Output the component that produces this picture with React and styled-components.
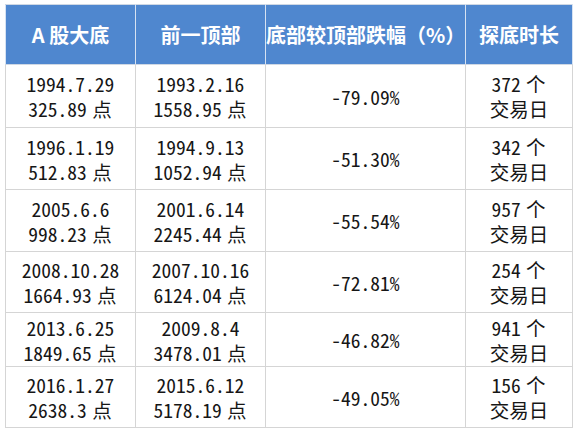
import React from "react";
import styled, { createGlobalStyle } from "styled-components";

const Global = createGlobalStyle`
  html, body { margin: 0; padding: 0; background: #ffffff; }
  body { font-family: "Noto Sans CJK SC", "Noto Sans", sans-serif; }
`;

const Page = styled.div`
  padding: 4px 0 0 5px;
  width: 578px;
  height: 438px;
  box-sizing: border-box;
`;

const Table = styled.table`
  border-collapse: collapse;
  table-layout: fixed;
  width: 567px;
`;

const Col = styled.col`
  width: ${(p) => p.$w}px;
`;

const HeadCell = styled.th`
  height: 59px;
  padding: 0;
  background: #4f87cf;
  color: #ffffff;
  font-family: "Noto Sans CJK SC", sans-serif;
  font-weight: 700;
  font-size: 20px;
  text-align: center;
  vertical-align: middle;
  border: 1px solid #cfd8e4;
  border-left-color: #d6e2f2;
  border-right-color: #d6e2f2;
  white-space: nowrap;
`;

const Row = styled.tr`
  height: ${(p) => p.$h}px;
`;

const Cell = styled.td`
  padding: 0;
  border: 1px solid #d5d5d5;
  text-align: center;
  vertical-align: middle;
  color: #161616;
  font-family: "Noto Sans CJK SC", sans-serif;
  font-feature-settings: "hwid" 1;
  font-size: 19.5px;
  line-height: 25px;
  white-space: nowrap;
`;

const Line = styled.div``;

const Unit = styled.span`
  font-feature-settings: normal;
  letter-spacing: 1px;
`;

const rows = [
  { h: 63, a: ["1994.7.29", "325.89"], b: ["1993.2.16", "1558.95"], p: "-79.09%", d: "372" },
  { h: 62, a: ["1996.1.19", "512.83"], b: ["1994.9.13", "1052.94"], p: "-51.30%", d: "342" },
  { h: 62, a: ["2005.6.6", "998.23"], b: ["2001.6.14", "2245.44"], p: "-55.54%", d: "957" },
  { h: 61, a: ["2008.10.28", "1664.93"], b: ["2007.10.16", "6124.04"], p: "-72.81%", d: "254" },
  { h: 54, a: ["2013.6.25", "1849.65"], b: ["2009.8.4", "3478.01"], p: "-46.82%", d: "941" },
  { h: 61, a: ["2016.1.27", "2638.3"], b: ["2015.6.12", "5178.19"], p: "-49.05%", d: "156" },
];

export default function App() {
  return (
    <Page>
      <Global />
      <Table>
        <colgroup>
          <Col $w={130} />
          <Col $w={130} />
          <Col $w={200} />
          <Col $w={107} />
        </colgroup>
        <thead>
          <tr>
            <HeadCell>A 股大底</HeadCell>
            <HeadCell>前一顶部</HeadCell>
            <HeadCell>底部较顶部跌幅（%）</HeadCell>
            <HeadCell>探底时长</HeadCell>
          </tr>
        </thead>
        <tbody>
          {rows.map((r, i) => (
            <Row key={i} $h={r.h}>
              <Cell>
                <Line>{r.a[0]}</Line>
                <Line>
                  {r.a[1]}
                  <Unit> 点</Unit>
                </Line>
              </Cell>
              <Cell>
                <Line>{r.b[0]}</Line>
                <Line>
                  {r.b[1]}
                  <Unit> 点</Unit>
                </Line>
              </Cell>
              <Cell>{r.p}</Cell>
              <Cell>
                <Line>
                  {r.d}
                  <Unit> 个</Unit>
                </Line>
                <Line>交易日</Line>
              </Cell>
            </Row>
          ))}
        </tbody>
      </Table>
    </Page>
  );
}
